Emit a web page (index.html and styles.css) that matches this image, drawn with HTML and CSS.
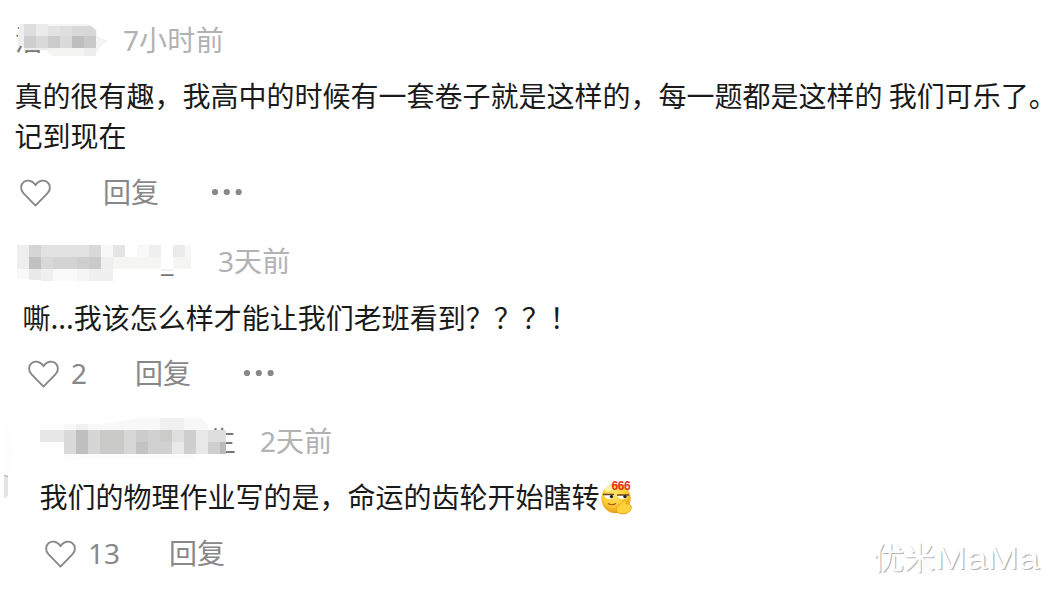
FILE: index.html
```html
<!DOCTYPE html>
<html lang="zh-CN">
<head>
    <meta charset="UTF-8">
    <meta name="viewport" content="width=device-width, initial-scale=1.0">
    <title>评论</title>
    <link rel="stylesheet" href="styles.css">
</head>
<body>
    <svg class="defs" width="0" height="0">
        <symbol id="heart" viewBox="0 0 32 28">
            <path d="M15.5 26.6 L3.4 14.2 C0.2 10.7 0.4 5.4 3.8 3 C7.2 0.8 11.6 1.4 13.9 4.2 L15.5 6.2 L17.1 4.2 C19.4 1.4 23.8 0.8 27.2 3 C30.6 5.4 30.8 10.7 27.6 14.2 Z" fill="none" stroke="#888" stroke-width="1.9" stroke-linejoin="round"/>
        </symbol>
        <symbol id="dots" viewBox="0 0 32 8">
            <g fill="#888"><circle cx="4" cy="4" r="3.1"/><circle cx="15.8" cy="4" r="3.1"/><circle cx="27.6" cy="4" r="3.1"/></g>
        </symbol>
    </svg>

    <div class="comment first">
        <div class="head">
            <div class="name">
                <span>潘</span>
                <svg class="mosaic" width="96" height="36" viewBox="0 0 96 36" shape-rendering="crispEdges">
                    <path d="M4 0H74L82 6V12L93 17L86 22L80 32H38L32 28V25H9V22H3V12Z" fill="#f4f4f3"/>
                    <path d="M5 0H9V22H3V12Z" fill="#eee"/>
                    <path d="M9 0h12v12h-12z" fill="#dedede"/>
                    <path d="M21 0h12v12h-12z" fill="#ebebeb"/>
                    <path d="M33 2h12v10h-12z" fill="#e2e2e2"/>
                    <path d="M45 2h12v10h-12z" fill="#dedede"/>
                    <path d="M57 2H77L81 7V12H57z" fill="#d8d8d8"/>
                    <path d="M9 12h12v12h-12z" fill="#cfcfcf"/>
                    <path d="M21 12h12v12h-12z" fill="#dadada"/>
                    <path d="M33 12h12v12h-12z" fill="#ccc"/>
                    <path d="M45 12h12v12h-12z" fill="#dadada"/>
                    <path d="M57 12h12v12h-12z" fill="#bebebe"/>
                    <path d="M69 12h12v12h-12z" fill="#c9c9c9"/>
                    <path d="M9 24h24v2h-24z" fill="#ebebeb"/>
                    <path d="M69 24h12v8h-12z" fill="#ededed"/>
                </svg>
            </div>
            <span class="time"><i>7</i>小时前</span>
        </div>
        <p class="text">真的很有趣，我高中的时候有一套卷子就是这样的，每一题都是这样的 我们可乐了<span class="half">。</span><br>记到现在</p>
        <div class="actions">
            <svg class="heart"><use href="#heart"/></svg>
            <span class="reply">回复</span>
            <svg class="dots"><use href="#dots"/></svg>
        </div>
    </div>

    <div class="comment second">
        <div class="head">
            <div class="name">
                <span class="underscore">_</span>
                <svg class="mosaic" width="174" height="36" viewBox="0 0 174 36" shape-rendering="crispEdges">
                    <path d="M0 0h12v24h-12z" fill="#eee"/>
                    <path d="M12 0h12v12h-12z" fill="#d5d5d5"/>
                    <path d="M24 0h48v12h-48z" fill="#e2e2e2"/>
                    <path d="M72 0h12v12h-12z" fill="#d9d9d9"/>
                    <path d="M84 0h12v12h-12z" fill="#f8f8f8"/>
                    <path d="M96 0h12v12h-12z" fill="#e5e5e5"/>
                    <path d="M120 0h12v12h-12z" fill="#f8f8f8"/>
                    <path d="M132 0h12v12h-12z" fill="#efefef"/>
                    <path d="M156 0h12v12h-12z" fill="#ebebeb"/>
                    <path d="M168 0h6v12h-6z" fill="#f7f7f7"/>
                    <path d="M12 12h12v12h-12z" fill="#c0c0c0"/>
                    <path d="M24 12h12v12h-12z" fill="#d8d8d8"/>
                    <path d="M36 12h24v12h-24z" fill="#d3d3d3"/>
                    <path d="M60 12h12v12h-12z" fill="#cecece"/>
                    <path d="M72 12h12v12h-12z" fill="#cacac9"/>
                    <path d="M84 12h12v12h-12z" fill="#efefef"/>
                    <path d="M96 12h48v12h-48zM156 12h18v12h-18z" fill="#f5f5f4"/>
                    <path d="M0 24h12v10h-12z" fill="#f9f9f9"/>
                    <path d="M12 24h12v11h-12z" fill="#e9e9e9"/>
                    <path d="M24 24h12v12h-12z" fill="#efefef"/>
                    <path d="M36 24h24v12h-24z" fill="#fafafa"/>
                    <path d="M60 24h12v12h-12z" fill="#f5f5f4"/>
                    <path d="M72 24h24v12h-24z" fill="#f0f0f0"/>
                    <path d="M144 24h12v2h-12z" fill="#f0f0f0"/>
                </svg>
            </div>
            <span class="time"><i>3</i>天前</span>
        </div>
        <p class="text">嘶...我该怎么样才能让我们老班看到？？？！</p>
        <div class="actions">
            <svg class="heart"><use href="#heart"/></svg>
            <span class="count">2</span>
            <span class="reply">回复</span>
            <svg class="dots"><use href="#dots"/></svg>
        </div>
    </div>

    <div class="comment third">
        <svg class="avatar" width="12" height="80" viewBox="0 0 12 80">
            <path d="M0 0C6 10 11 22 8 40L4 53H0Z" fill="#fdfdfd"/>
            <path d="M0 53h4v21l-4 3z" fill="#e4e4e4"/>
            <path d="M0 53l4 2" stroke="#aaa" fill="none"/>
        </svg>
        <div class="head">
            <div class="name">
                <span class="last">生</span>
                <svg class="mosaic" width="190" height="46" viewBox="0 0 190 46" shape-rendering="crispEdges">
                    <path d="M24 6h36L78 4L98 0H160L168 8V12H24z" fill="#f8f8f8"/>
                    <path d="M120 0h24v12h-24z" fill="#f0f0f0"/>
                    <path d="M36 6h12v6h-12z" fill="#f0f0f0"/>
                    <path d="M24 36h130v5h-110l-20 3z" fill="#fcfcfc"/>
                    <path d="M0 12h24v12h-24z" fill="#e7e7e7"/>
                    <path d="M24 12h12v24h-12z" fill="#dadada"/>
                    <path d="M36 12h12v24h-12z" fill="#bfbfbf"/>
                    <path d="M48 12h12v24h-12z" fill="#d6d6d6"/>
                    <path d="M60 12h24v24h-24z" fill="#cacac9"/>
                    <path d="M84 12h12v24h-12z" fill="#d7d7d7"/>
                    <path d="M96 12h12v12h-12z" fill="#ccc"/>
                    <path d="M96 24h12v12h-12z" fill="#c3c3c3"/>
                    <path d="M108 12h24v24h-24z" fill="#d1d1d1"/>
                    <path d="M120 12h12v12h-12z" fill="#cbcbc9"/>
                    <path d="M132 12h12v12h-12z" fill="#dfdfdf"/>
                    <path d="M132 24h12v12h-12z" fill="#e9e9e9"/>
                    <path d="M144 12h12v24h-12z" fill="#cfcfcf"/>
                    <path d="M156 12h12v24h-12z" fill="#e8e8e8"/>
                    <path d="M168 12h18v12h-18z" fill="#dedede"/>
                    <path d="M168 24h12v12h-12z" fill="#cfcfcf"/>
                    <path d="M180 24h6v12h-6z" fill="#bababa"/>
                </svg>
            </div>
            <span class="time"><i>2</i>天前</span>
        </div>
        <p class="text">我们的物理作业写的是，命运的齿轮开始瞎转<span class="emoji"><svg width="32" height="34" viewBox="0 0 32 34">
                <defs>
                    <radialGradient id="face" cx="45%" cy="35%" r="65%">
                        <stop offset="0" stop-color="#ffe66b"/>
                        <stop offset="0.65" stop-color="#fcc931"/>
                        <stop offset="1" stop-color="#e99a16"/>
                    </radialGradient>
                </defs>
                <circle cx="16" cy="17.5" r="14.7" fill="url(#face)"/>
                <ellipse cx="9.5" cy="7.5" rx="5" ry="2.5" fill="#fff0a8" transform="rotate(-25 9.5 7.5)"/>
                <path d="M4 14h10c0 5-9 5.500-10 0zM17 14h11c-1 5.500-10 5-11 0z" fill="#fff"/>
                <path d="M3 13.500H14M17 14H29" stroke="#704213" stroke-width="1.300"/>
                <circle cx="11.500" cy="15.600" r="1.700" fill="#222"/>
                <circle cx="25" cy="15.600" r="1.700" fill="#222"/>
                <path d="M8 22.500q4 2.500 8 0" stroke="#a45a13" stroke-width="1.200" fill="none"/>
                <path d="M17 26c1-3 4-2 6-6c2-2 4 0 3 3c4-1 6 2 5 5c-2 5-9 6-12 4c-3-1-3-4-2-6z" fill="#ffd23b" stroke="#e39a1d" stroke-width="0.900"/>
            </svg><b>666</b></span></p>
        <div class="actions">
            <svg class="heart"><use href="#heart"/></svg>
            <span class="count">13</span>
            <span class="reply">回复</span>
        </div>
    </div>

    <div class="watermark">优米<span>MaMa</span></div>
</body>
</html>
```
FILE: styles.css
```css
body {
    margin: 0;
    padding-top: 20px;
    width: 1055px;
    height: 573px;
    overflow: hidden;
    background-color: #fff;
    font-family: "Noto Sans", "Noto Sans CJK SC", sans-serif;
    font-size: 28px;
    line-height: 40px;
    color: #1a1a1a;
    position: relative;
}
.defs {
    position: absolute;
}
.comment {
    position: relative;
    white-space: nowrap;
}
.first {
    padding-left: 15px;
}
.second {
    padding-left: 23px;
    margin-top: 29px;
}
.third {
    padding-left: 40px;
    margin-top: 28px;
}
.head {
    display: flex;
    height: 40px;
}
.name {
    position: relative;
    color: #777;
}
.first .name {
    width: 108px;
}
.second .name {
    width: 195px;
}
.third .name {
    width: 220px;
}
.mosaic {
    position: absolute;
    left: 0;
    top: 4px;
}
.second .mosaic {
    left: -6px;
}
.third .mosaic {
    top: -3px;
}
.underscore {
    display: block;
    padding-left: 138px;
}
.last {
    display: block;
    padding-left: 168px;
}
.time {
    color: #b2b2b2;
    letter-spacing: 0.3px;
}
.time i {
    font-style: normal;
    letter-spacing: 0;
}
.text {
    margin: 15px 0 17px;
    margin-left: -0.5px;
    font-family: "Noto Sans CJK SC", sans-serif;
}
.half {
    font-feature-settings: "halt";
}
.second .text {
    margin-top: 16px;
    margin-bottom: 16px;
}
.third .text {
    margin-top: 15px;
    margin-bottom: 17px;
}
.actions {
    display: flex;
    align-items: center;
    height: 40px;
    color: #888;
}
.heart {
    width: 32px;
    height: 28px;
    margin-left: 5px;
    margin-top: 2px;
}
.count {
    margin-left: 11px;
}
.reply {
    margin-left: 51px;
}
.second .reply {
    margin-left: 48px;
}
.third .reply {
    margin-left: 49px;
}
.dots {
    width: 32px;
    height: 8px;
    margin-left: 52px;
}
.emoji {
    display: inline-block;
    position: relative;
    width: 32px;
    height: 34px;
    vertical-align: -7px;
    line-height: 0;
}
.emoji b {
    position: absolute;
    left: 12px;
    top: -1px;
    font: bold 12px/12px "Liberation Sans", sans-serif;
    letter-spacing: -0.4px;
    color: #e8321e;
}
.avatar {
    position: absolute;
    left: 4px;
    top: 1px;
}
.watermark {
    position: absolute;
    left: 873px;
    top: 539px;
    font-family: "Liberation Sans", "Noto Sans CJK SC", sans-serif;
    font-size: 31px;
    color: #fff;
    text-shadow: 1px 1px 0 #b4b4b4;
}
.watermark span {
    display: inline-block;
    transform: scaleX(1.21);
    transform-origin: left;
}
```
